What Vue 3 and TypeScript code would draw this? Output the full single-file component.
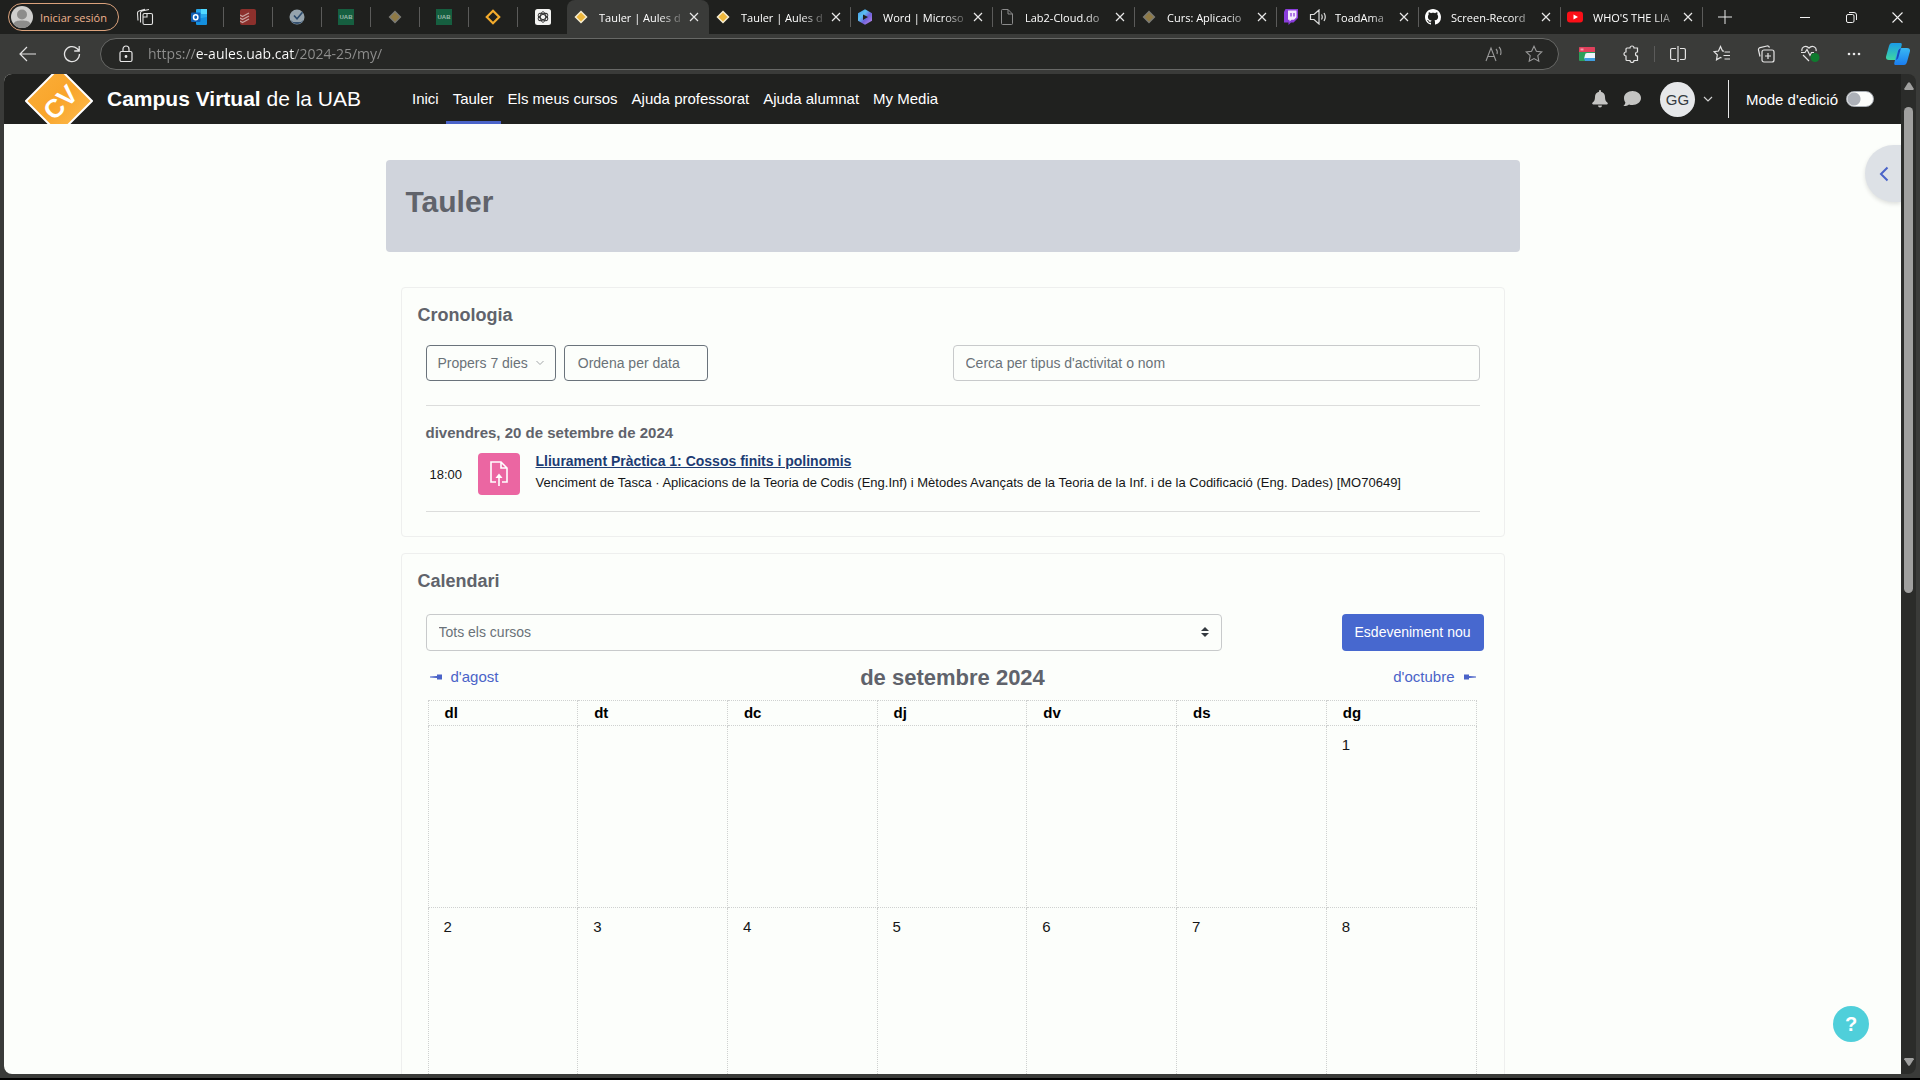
<script setup lang="ts">
import { ref } from 'vue'

interface Tab {
  icon: string
  title: string
  sound?: boolean
}

const pinned: string[] = ['outlook', 'todoist', 'check', 'uab', 'dim', 'uab', 'ring', 'gpt']

const tabs: Tab[] = [
  { icon: 'gold', title: 'Tauler | Aules d' },
  { icon: 'gold', title: 'Tauler | Aules d' },
  { icon: 'm365', title: 'Word | Microso' },
  { icon: 'file', title: 'Lab2-Cloud.do' },
  { icon: 'dim', title: 'Curs: Aplicacio' },
  { icon: 'twitch', title: 'ToadAma', sound: true },
  { icon: 'github', title: 'Screen-Record' },
  { icon: 'youtube', title: "WHO'S THE LIA" },
]

const url = ref('https://e-aules.uab.cat/2024-25/my/')
const search = ref('')
const editing = ref(false)

const menu: string[] = ['Inici', 'Tauler', 'Els meus cursos', 'Ajuda professorat', 'Ajuda alumnat', 'My Media']
const weekdays: string[] = ['dl', 'dt', 'dc', 'dj', 'dv', 'ds', 'dg']
const weeks: string[][] = [
  ['', '', '', '', '', '', '1'],
  ['2', '3', '4', '5', '6', '7', '8'],
]
</script>

<template>
  <div class="browser">
    <svg class="sprite" width="0" height="0" aria-hidden="true">
      <defs>
        <linearGradient id="gr-m365" x1="0" y1="0" x2="1" y2="1">
          <stop offset="0" stop-color="#3f8fe8" /><stop offset=".35" stop-color="#5ac0f0" /><stop offset=".6" stop-color="#6f62dc" /><stop offset="1" stop-color="#c58be8" />
        </linearGradient>
        <linearGradient id="gr-cop1" x1="0" y1="0" x2="0" y2="1">
          <stop offset="0" stop-color="#1a9be8" /><stop offset="1" stop-color="#3fd6a0" />
        </linearGradient>
        <linearGradient id="gr-cop2" x1="0" y1="0" x2="0" y2="1">
          <stop offset="0" stop-color="#39b8f2" /><stop offset="1" stop-color="#1a7df0" />
        </linearGradient>
        <linearGradient id="gr-logo" x1="0" y1="0" x2="1" y2="1">
          <stop offset="0" stop-color="#fbb03b" /><stop offset=".5" stop-color="#f9a52b" /><stop offset="1" stop-color="#fdc158" />
        </linearGradient>
      </defs>
      <symbol id="i-outlook" viewBox="0 0 16 16">
        <rect x="5" y="0" width="11" height="13" rx="1" fill="#28a8ea" /><rect x="10" y="0" width="6" height="5" fill="#50d9ff" />
        <path d="M5 10l11-2v7a1 1 0 0 1-1 1H6a1 1 0 0 1-1-1z" fill="#1490df" />
        <rect x="0" y="3.5" width="9.500" height="9.500" rx="1" fill="#0f5fb5" />
        <ellipse cx="4.700" cy="8.200" rx="2.200" ry="2.500" fill="none" stroke="#fff" stroke-width="1.500" />
      </symbol>
      <symbol id="i-todoist" viewBox="0 0 16 16">
        <rect width="16" height="16" rx="2" fill="#8c302c" />
        <path d="M0 6l2.500 1.600L9 4M0 9l2.500 1.600L9 7M0 12l2.500 1.600L9 10" fill="none" stroke="#c9a39f" stroke-width="1.300" />
      </symbol>
      <symbol id="i-check" viewBox="0 0 16 16">
        <circle cx="8" cy="8" r="7.500" fill="#95a3ad" /><path d="M1.500 11a7.300 7.300 0 0 0 13 0L12 13H4z" fill="#35506e" />
        <path d="M5 6.500l3 3.200 5.500-6.500" fill="none" stroke="#2b4a6c" stroke-width="1.600" />
      </symbol>
      <symbol id="i-uab" viewBox="0 0 16 16">
        <rect width="16" height="16" fill="#165f40" />
        <text x="8" y="10" text-anchor="middle" font-size="6" font-weight="700" font-family="Liberation Sans, sans-serif" fill="#9cb8aa">UAB</text>
      </symbol>
      <symbol id="i-dim" viewBox="0 0 16 16"><path d="M8 2.500L13.500 8 8 13.500 2.500 8z" fill="#8f7a45" stroke="#7b7b76" stroke-width="1.300" /></symbol>
      <symbol id="i-ring" viewBox="0 0 16 16"><path d="M8 1.800L14.200 8 8 14.200 1.800 8z" fill="none" stroke="#f3ab2c" stroke-width="2.200" /></symbol>
      <symbol id="i-gold" viewBox="0 0 16 16"><path d="M8 2.500L13.500 8 8 13.500 2.500 8z" fill="#efb83c" stroke="#f6ecd0" stroke-width="1.500" /></symbol>
      <symbol id="i-gpt" viewBox="0 0 16 16">
        <rect width="16" height="16" rx="2.500" fill="#f4f4f2" />
        <g fill="none" stroke="#333" stroke-width=".9">
          <ellipse cx="8" cy="8" rx="2.600" ry="5.300" /><ellipse cx="8" cy="8" rx="2.600" ry="5.300" transform="rotate(60 8 8)" /><ellipse cx="8" cy="8" rx="2.600" ry="5.300" transform="rotate(120 8 8)" />
        </g>
      </symbol>
      <symbol id="i-m365" viewBox="0 0 16 16">
        <path d="M8 .3L15 4.200v7.600L8 15.700 1 11.800V4.200zM6 5.500v5.500l5-3z" fill="url(#gr-m365)" fill-rule="evenodd" />
      </symbol>
      <symbol id="i-file" viewBox="0 0 16 16">
        <path d="M2.500 1.500a1 1 0 0 1 1-1H9l4.500 4.500v9.500a1 1 0 0 1-1 1h-9a1 1 0 0 1-1-1zM9 .5V5h4.500" fill="none" stroke="#8b8b8b" />
      </symbol>
      <symbol id="i-twitch" viewBox="0 0 16 16">
        <path d="M2.500 0H15v9l-4.500 4.500H8L5.500 16v-2.500H1V3z" fill="#8a3ddb" /><path d="M5 1.500h8.500v6.800L11 10.800H8.500l-2 1.700v-1.700H5z" fill="#f3eafc" />
        <path d="M8 4v3.500M11 4v3.500" stroke="#8a3ddb" stroke-width="1.300" />
      </symbol>
      <symbol id="i-github" viewBox="0 0 16 16">
        <path fill="#fff" d="M8 0C3.580 0 0 3.580 0 8c0 3.540 2.290 6.530 5.470 7.590.4.070.55-.17.55-.38 0-.19-.01-.82-.01-1.490-2.010.37-2.530-.49-2.690-.94-.09-.23-.48-.94-.82-1.130-.28-.15-.68-.52-.01-.53.63-.01 1.080.58 1.230.82.72 1.210 1.870.87 2.330.66.07-.52.28-.87.510-1.070-1.780-.2-3.640-.89-3.640-3.950 0-.87.310-1.590.820-2.150-.08-.2-.36-1.020.08-2.120 0 0 .67-.21 2.200.82.64-.18 1.320-.27 2-.27s1.360.09 2 .27c1.530-1.040 2.200-.82 2.200-.82.44 1.100.16 1.920.08 2.120.51.56.82 1.270.82 2.150 0 3.070-1.870 3.750-3.650 3.950.29.25.54.73.54 1.480 0 1.070-.01 1.930-.01 2.200 0 .21.15.46.55.38A8.010 8.010 0 0 0 16 8c0-4.420-3.580-8-8-8z" />
      </symbol>
      <symbol id="i-youtube" viewBox="0 0 16 16"><rect y="2.500" width="16" height="11" rx="3" fill="#fb0f17" /><path d="M6.500 5.500v5L11 8z" fill="#fff" /></symbol>
    </svg>

    <header class="tabstrip">
      <button class="signin" type="button">
        <svg width="22" height="22" viewBox="0 0 22 22"><circle cx="11" cy="11" r="11" fill="#cfcfcd" /><circle cx="11" cy="8.500" r="5" fill="#8d8d8b" /><path d="M2.500 18c1-3 4-3.500 8.500-3.500s7.500.5 8.500 3.500A11 11 0 0 1 2.500 18z" fill="#8d8d8b" /></svg>
        <span>Iniciar sesión</span>
      </button>
      <button class="icon-btn workspaces" type="button" aria-label="Espais de treball">
        <svg width="18" height="18" viewBox="0 0 18 18" fill="none" stroke="#e4e4e4" stroke-width="1.100"><rect x="7" y="5.500" width="9.500" height="11" rx="1.500" /><path d="M4.500 14.500V5a2 2 0 0 1 1.500-2l7-1.500M2 12.500L1.500 5A2 2 0 0 1 3 3l6-1.800M7 9h4V5.500" /></svg>
      </button>
      <div class="pinned">
        <button v-for="(p, i) in pinned" :key="i" class="pin" type="button" :aria-label="p">
          <svg width="16" height="16"><use :href="'#i-' + p" /></svg>
        </button>
      </div>
      <div class="tabs">
        <div v-for="(t, i) in tabs" :key="i" class="tab" :class="{ active: i === 0 }">
          <svg class="fav" width="16" height="16"><use :href="'#i-' + t.icon" /></svg>
          <svg v-if="t.sound" class="sound" width="18" height="16" viewBox="0 0 18 16" fill="none" stroke="#ddd" stroke-width="1.200"><path d="M1.500 5.500h3.500L10 1v14l-5-4.500H1.500zM12.500 5.500q1.500 2.500 0 5M15 4q2.500 4 0 8" /></svg>
          <span class="title">{{ t.title }}</span>
          <button class="close" type="button" aria-label="Tanca la pestanya">
            <svg width="10" height="10" viewBox="0 0 10 10" stroke="#e8e8e8" stroke-width="1.200"><path d="M1 1l8 8M9 1L1 9" /></svg>
          </button>
        </div>
      </div>
      <button class="icon-btn plus" type="button" aria-label="Pestanya nova">
        <svg width="14" height="14" viewBox="0 0 14 14" stroke="#e8e8e8"><path d="M7 0v14M0 7h14" /></svg>
      </button>
      <div class="window-btns">
        <button class="icon-btn" type="button" aria-label="Minimitza"><svg width="10" height="10" viewBox="0 0 10 10" stroke="#f2f2f2"><path d="M0 5.500h10" /></svg></button>
        <button class="icon-btn" type="button" aria-label="Restaura"><svg width="11" height="11" viewBox="0 0 11 11" fill="none" stroke="#f2f2f2"><rect x=".5" y="2.500" width="7.500" height="8" rx="1.500" /><path d="M3 .5h5a2.500 2.500 0 0 1 2.500 2.500v5" /></svg></button>
        <button class="icon-btn" type="button" aria-label="Tanca"><svg width="11" height="11" viewBox="0 0 11 11" stroke="#f2f2f2" stroke-width="1.100"><path d="M.5.5l10 10M10.500.5l-10 10" /></svg></button>
      </div>
    </header>

    <div class="toolbar">
      <button class="icon-btn" type="button" aria-label="Enrere"><svg width="18" height="16" viewBox="0 0 18 16" fill="none" stroke="#e4e4e4" stroke-width="1.200"><path d="M17 8H1.500M8 1L1 8l7 7" /></svg></button>
      <button class="icon-btn" type="button" aria-label="Actualitza"><svg width="18" height="18" viewBox="0 0 18 18" fill="none" stroke="#e4e4e4" stroke-width="1.300"><path d="M16.500 9A7.500 7.500 0 1 1 14 3.500L16 5.500M16.200 1v5h-5" /></svg></button>
      <div class="address">
        <svg width="16" height="18" viewBox="0 0 16 18" fill="none" stroke="#e8e8e8" stroke-width="1.200"><rect x="2" y="6.500" width="12" height="10" rx="1.500" /><path d="M5 6.500V4a3 3 0 0 1 6 0v2.500" /><circle cx="8" cy="11.500" r=".8" fill="#e8e8e8" /></svg>
        <input v-model="url" class="url" type="text" aria-label="Adreça" spellcheck="false" />
        <button class="icon-btn" type="button" aria-label="Llegeix en veu alta"><svg width="18" height="16" viewBox="0 0 18 16" fill="none" stroke="#9a9a9a" stroke-width="1.100"><path d="M1 15L6 2l5 13M3 10.500h6M11 3q2 2 1 5M14 1q3 3 1.500 8" /></svg></button>
        <button class="icon-btn" type="button" aria-label="Afegeix als preferits"><svg width="18" height="18" viewBox="0 0 18 18" fill="none" stroke="#9a9a9a" stroke-width="1.100"><path d="M9 1.200l2.400 5 5.400.7-4 3.800 1 5.500L9 13.600l-4.800 2.600 1-5.500-4-3.800 5.400-.7z" /></svg></button>
      </div>
      <div class="actions">
        <button class="icon-btn" type="button" aria-label="Extensió"><svg width="16" height="14" viewBox="0 0 16 14"><rect width="16" height="14" rx="1" fill="#2e9e5b" /><path d="M0 1a1 1 0 0 1 1-1h14a1 1 0 0 1 1 1v4H0z" fill="#e0405c" /><rect x="1.500" y="1.500" width="3" height="2" fill="#f59aac" /><path d="M6 8q0-2 2-2h8v6H5z" fill="#eef5fb" /><path d="M5 11h11v3H6z" fill="#3f9ee0" /></svg></button>
        <button class="icon-btn" type="button" aria-label="Extensions"><svg width="18" height="18" viewBox="0 0 18 18" fill="none" stroke="#e4e4e4" stroke-width="1.200"><path d="M5 3h3a2 2 0 1 1 4 0h3.500v4a2 2 0 1 0 0 4v4.500H12a2 2 0 0 1-4 0H5a1 1 0 0 1-1-1V11a2 2 0 1 1 0-4V4a1 1 0 0 1 1-1z" /></svg></button>
        <i class="rule"></i>
        <button class="icon-btn" type="button" aria-label="Pantalla dividida"><svg width="16" height="16" viewBox="0 0 16 16" fill="none" stroke="#e4e4e4" stroke-width="1.200"><path d="M6 2.500H2A1.500 1.500 0 0 0 .6 4v8A1.500 1.500 0 0 0 2 13.500h4M10 2.500h4A1.500 1.500 0 0 1 15.400 4v8a1.500 1.500 0 0 1-1.400 1.500h-4M8 0v16" /></svg></button>
        <button class="icon-btn" type="button" aria-label="Preferits"><svg width="18" height="18" viewBox="0 0 18 18" fill="none" stroke="#e4e4e4" stroke-width="1.200"><path d="M11 6.200L9.500 6 7.500 1.500 5.500 6 1 6.600l3.300 3.200-.8 5L7.500 12.500l1 .5M11.500 7H17M10.500 10.500H17M11.500 14H17" /></svg></button>
        <button class="icon-btn" type="button" aria-label="Col·leccions"><svg width="18" height="18" viewBox="0 0 18 18" fill="none" stroke="#e4e4e4" stroke-width="1.200"><rect x="5" y="5" width="12" height="12" rx="2" /><path d="M11 8v6M8 11h6M3 11.500L1.500 5A2 2 0 0 1 3 2.600l7-1.600a2 2 0 0 1 2.400 1.600" /></svg></button>
        <button class="icon-btn" type="button" aria-label="Rendiment"><svg width="20" height="18" viewBox="0 0 20 18" fill="none" stroke="#e4e4e4" stroke-width="1.200"><path d="M2 6C1 2 6-.5 9 3c3-3.500 8-1 7 3M3 10l6 6M1 7.500h4l2-3 3 6 1.500-3H14" /><circle cx="15" cy="12.500" r="4.500" fill="#0f7a2e" stroke="none" /></svg></button>
        <button class="icon-btn" type="button" aria-label="Més"><svg width="14" height="4" viewBox="0 0 14 4" fill="#e8e8e8"><circle cx="2" cy="2" r="1.300" /><circle cx="7" cy="2" r="1.300" /><circle cx="12" cy="2" r="1.300" /></svg></button>
        <button class="icon-btn" type="button" aria-label="Copilot"><svg width="24" height="22" viewBox="0 0 24 22"><path d="M6 0h8c2 0 2 1 1.500 3L12.500 14c-.5 2-1.500 3-3.500 3H3c-2.500 0-3.500-1.500-2.800-4L3 3c.6-2 1.500-3 3-3z" fill="url(#gr-cop1)" /><path d="M18 5h3c2.500 0 3.500 1.500 2.800 4L21 19c-.6 2-1.500 3-3 3h-8c-2 0-2-1-1.500-3l3-11c.5-2 1.500-3 3.500-3z" fill="url(#gr-cop2)" /><path d="M16 5c-2 .3-3.500 1-4 3L10 17h-1c2 0 3-1 3.500-3L15 5z" fill="#1849b8" /></svg></button>
      </div>
    </div>

    <div class="viewport">
      <div class="page">
        <nav class="navbar">
          <a class="brand" href="#">
            <svg width="70" height="50" viewBox="0 0 70 50"><path d="M35-6L68 27 35 60 2 27z" fill="url(#gr-logo)" stroke="#fff" stroke-width="2" stroke-linejoin="round" /><text x="35" y="38" text-anchor="middle" transform="rotate(-45 35 27)" font-size="26" font-weight="700" font-family="Liberation Sans, sans-serif" fill="#fff">CV</text></svg>
            <span><b>Campus Virtual</b> de la UAB</span>
          </a>
          <ul class="menu">
            <li v-for="m in menu" :key="m"><a href="#" :class="{ current: m === 'Tauler' }">{{ m }}</a></li>
          </ul>
          <div class="user">
            <button class="icon-btn" type="button" aria-label="Notificacions"><svg width="16" height="18" viewBox="0 0 16 18" fill="#c4c4c2"><path d="M8 0a1 1 0 0 1 1 1v.8c2.500.5 4 2.500 4 5 0 4 1.500 5 2.500 6 .7.8.2 1.700-.7 1.700H1.200c-.9 0-1.400-.9-.7-1.700 1-1 2.500-2 2.500-6 0-2.500 1.500-4.500 4-5V1a1 1 0 0 1 1-1zM6 15.500h4a2 2 0 0 1-4 0z" /></svg></button>
            <button class="icon-btn" type="button" aria-label="Missatges"><svg width="18" height="16" viewBox="0 0 18 16" fill="#c4c4c2"><path d="M9.500 0C14.200 0 18 3 18 7s-3.800 7-8.500 7c-1.300 0-2.500-.2-3.500-.6C4.500 14.500 2.500 15.200.4 15c1-1 1.800-2.400 2-3.600C1.500 10.200 1 8.700 1 7c0-4 3.800-7 8.500-7z" /></svg></button>
            <button class="account" type="button"><span class="avatar">GG</span><svg width="10" height="6" viewBox="0 0 10 6" fill="none" stroke="#d0d0d0" stroke-width="1.200"><path d="M1 1l4 4 4-4" /></svg></button>
            <label class="edit"><span>Mode d'edició</span><input v-model="editing" type="checkbox" role="switch" /></label>
          </div>
        </nav>

        <button class="drawer" type="button" aria-label="Obre el calaix de blocs"><svg width="10" height="16" viewBox="0 0 10 16" fill="none" stroke="#4a63c8" stroke-width="2"><path d="M8.500 1.500L2 8l6.500 6.500" /></svg></button>

        <main class="content">
          <div class="banner"><h1>Tauler</h1></div>

          <section class="card">
            <h2>Cronologia</h2>
            <div class="inner">
              <div class="filters">
                <button class="outline" type="button">Propers 7 dies <svg width="8" height="6" viewBox="0 0 8 6" fill="none" stroke="#a3a6a8"><path d="M.5 1L4 4.500 7.500 1" /></svg></button>
                <button class="outline sort" type="button">Ordena per data</button>
                <input v-model="search" class="search" type="text" placeholder="Cerca per tipus d'activitat o nom" aria-label="Cerca per tipus d'activitat o nom" />
              </div>
              <hr />
              <h3>divendres, 20 de setembre de 2024</h3>
              <div class="event">
                <time>18:00</time>
                <span class="badge"><svg width="18" height="26" viewBox="0 0 18 26" fill="none" stroke="#fff" stroke-width="1.600"><path d="M6 21H1V1h10l6 6v14h-5M11 1v6h6M9 25V14" /><path d="M9 12.500l-3.500 4.500h7z" fill="#fff" stroke="none" /></svg></span>
                <div class="detail">
                  <a href="#">Lliurament Pràctica 1: Cossos finits i polinomis</a>
                  <p>Venciment de Tasca · Aplicacions de la Teoria de Codis (Eng.Inf) i Mètodes Avançats de la Teoria de la Inf. i de la Codificació (Eng. Dades) [MO70649]</p>
                </div>
              </div>
              <hr class="last" />
            </div>
          </section>

          <section class="card">
            <h2>Calendari</h2>
            <div class="course-row">
              <div class="select-wrap">
                <select aria-label="Curs"><option>Tots els cursos</option></select>
                <svg width="8" height="10" viewBox="0 0 8 10" fill="#343a40"><path d="M4 0l4 4H0zM0 6h8l-4 4z" /></svg>
              </div>
              <button class="primary" type="button">Esdeveniment nou</button>
            </div>
            <div class="month-nav">
              <a href="#"><svg width="12" height="6" viewBox="0 0 12 6" fill="#4a63c8"><path d="M0 2.500L7 2V.5h5v5H7V4L0 3.500z" /></svg>d'agost</a>
              <h4>de setembre 2024</h4>
              <a class="next" href="#">d'octubre<svg width="12" height="6" viewBox="0 0 12 6" fill="#4a63c8"><path d="M12 2.500L5 2V.5H0v5h5V4l7-.5z" /></svg></a>
            </div>
            <table>
              <thead><tr><th v-for="d in weekdays" :key="d" scope="col">{{ d }}</th></tr></thead>
              <tbody><tr v-for="(w, i) in weeks" :key="i"><td v-for="(d, j) in w" :key="j">{{ d }}</td></tr></tbody>
            </table>
          </section>
        </main>

        <button class="help" type="button" aria-label="Ajuda">?</button>
      </div>
      <div class="scrollbar">
        <svg width="10" height="8" viewBox="0 0 10 8" fill="#a0a09f"><path d="M4 .8q1-1 2 0l3.800 6q0 1.200-1 1.200H1.200q-1 0-1-1.200z" /></svg>
        <div class="track"><div class="thumb"></div></div>
        <svg width="10" height="8" viewBox="0 0 10 8" fill="#a0a09f"><path d="M4 7.200q1 1 2 0l3.800-6Q9.800 0 8.800 0H1.200q-1 0-1 1.200z" /></svg>
      </div>
    </div>
  </div>
</template>

<style>
body {
  margin: 0;
  background: #000;
}
</style>

<style scoped>
* {
  box-sizing: border-box;
}
button,
input,
select {
  font: inherit;
  color: inherit;
  margin: 0;
}
button {
  padding: 0;
  border: 0;
  background: none;
  white-space: nowrap;
}
svg {
  display: block;
  flex: none;
}
a {
  color: inherit;
  text-decoration: none;
}
.sprite {
  position: absolute;
}
.browser {
  display: flex;
  flex-direction: column;
  height: 100vh;
  overflow: hidden;
  border-bottom: 2px solid #000;
  background: #3a3b39;
  font-family: 'Open Sans', 'Noto Sans', sans-serif;
  font-size: 11px;
  color: #fff;
}
.icon-btn {
  display: flex;
  align-items: center;
  justify-content: center;
}

/* tab strip */
.tabstrip {
  display: flex;
  align-items: center;
  height: 34px;
  flex: none;
  background: #1f201e;
}
.signin {
  display: flex;
  align-items: center;
  gap: 7px;
  width: 111px;
  height: 28px;
  margin-left: 8px;
  padding-left: 2px;
  border: 1px solid #dba27c;
  border-radius: 14px;
  color: #f0b48f;
}
.workspaces {
  width: 52px;
}
.pinned {
  display: flex;
  margin-left: 4px;
}
.pin {
  display: flex;
  align-items: center;
  justify-content: center;
  width: 49px;
  height: 20px;
  border-right: 1px solid #5b5b5a;
}
.pin:last-child {
  border-right: 0;
}
.tabs {
  display: flex;
  height: 34px;
}
.tab {
  display: flex;
  align-items: center;
  width: 142px;
  padding: 0 10px 0 6px;
  border-radius: 8px 8px 0 0;
  background: linear-gradient(#5b5b5a, #5b5b5a) right center / 1px 20px no-repeat;
}
.tab.active {
  background: #3a3b39;
}
.fav {
  margin-right: 10px;
}
.sound {
  margin-right: 8px;
}
.title {
  flex: 1;
  white-space: nowrap;
  -webkit-mask-image: linear-gradient(to left, rgba(0, 0, 0, 0.15), #000 24px);
  mask-image: linear-gradient(to left, rgba(0, 0, 0, 0.15), #000 24px);
}
.close {
  margin-left: 6px;
}
.plus {
  width: 44px;
}
.window-btns {
  display: flex;
  margin-left: auto;
}
.window-btns .icon-btn {
  width: 46px;
  height: 34px;
}

/* address bar */
.toolbar {
  display: flex;
  align-items: center;
  height: 40px;
  flex: none;
  padding-left: 19px;
}
.toolbar > .icon-btn {
  margin-right: 26px;
}
.toolbar > .icon-btn + .icon-btn {
  margin-right: 19px;
}
.address {
  display: flex;
  align-items: center;
  gap: 22px;
  flex: 1;
  height: 32px;
  padding: 0 15px 0 17px;
  border: 1px solid #676866;
  border-radius: 16px;
  background: #262725;
}
.url {
  flex: 1;
  min-width: 0;
  margin-left: -8px;
  padding: 0;
  border: 0;
  outline: 0;
  font-size: 14px;
  line-height: 20px;
  color: transparent;
  background: linear-gradient(to right, #8f8f8e 48px, #fff 48px, #fff 147px, #8f8f8e 147px);
  -webkit-background-clip: text;
  background-clip: text;
}
.actions {
  display: flex;
  align-items: center;
}
.actions .icon-btn {
  width: 44px;
}
.actions .icon-btn:first-child {
  margin-left: 6px;
}
.rule {
  width: 1px;
  height: 16px;
  margin: 0 1px;
  background: #5b5b5a;
}

/* page frame */
.viewport {
  display: flex;
  flex: 1;
  min-height: 0;
  margin: 0 4px 4px;
  border-radius: 8px;
  overflow: hidden;
  background: #2b2c2a;
  font-family: 'Liberation Sans', Arial, sans-serif;
}
.page {
  position: relative;
  flex: 1;
  overflow: hidden;
  background: #fcfefb;
  color: #151617;
  font-size: 14px;
}
.scrollbar {
  display: flex;
  flex-direction: column;
  align-items: center;
  width: 15px;
  padding: 8px 0;
}
.track {
  flex: 1;
  width: 9px;
  margin: 17px 0;
}
.thumb {
  height: 52%;
  border-radius: 5px;
  background: #a0a09f;
}

/* site navbar */
.navbar {
  display: flex;
  align-items: center;
  height: 50px;
  padding-left: 20px;
  background: #20211f;
  color: #fff;
  font-size: 15px;
  white-space: nowrap;
}
.brand {
  display: flex;
  align-items: center;
  gap: 13px;
  width: 381px;
  font-size: 21px;
}
.menu {
  display: flex;
  margin: 0;
  padding: 0;
  list-style: none;
}
.menu a {
  display: block;
  padding: 0 7px;
  border-bottom: 3px solid transparent;
  border-top: 3px solid transparent;
  line-height: 44px;
}
.menu .current {
  border-bottom-color: #4a63c8;
}
.user {
  display: flex;
  align-items: center;
  margin-left: auto;
  padding-right: 27px;
}
.user .icon-btn {
  margin-right: 15px;
}
.account {
  display: flex;
  align-items: center;
  gap: 8px;
  margin-left: 4px;
}
.avatar {
  width: 35px;
  height: 35px;
  border-radius: 50%;
  background: #e6e8ea;
  color: #343a40;
  font-size: 15px;
  line-height: 35px;
}
.edit {
  display: flex;
  align-items: center;
  gap: 8px;
  height: 38px;
  margin-left: 15px;
  padding-left: 17px;
  border-left: 1px solid #e8e8e8;
}
.edit input {
  appearance: none;
  width: 28px;
  height: 16px;
  border: 1px solid #a8adb3;
  border-radius: 8px;
  background: radial-gradient(circle at 7px 7px, #adb1b8 6px, #fcfdfb 7px);
}
.drawer {
  position: absolute;
  top: 71px;
  right: 0;
  display: flex;
  align-items: center;
  width: 36px;
  height: 57px;
  padding-left: 14px;
  border-radius: 29px 0 0 29px;
  background: #dde1e6;
  box-shadow: 0 2px 4px rgba(0, 0, 0, 0.12);
}
.help {
  position: absolute;
  right: 32px;
  bottom: 32px;
  width: 36px;
  height: 36px;
  border-radius: 50%;
  background: #4fcfda;
  color: #fff;
  font-size: 20px;
  font-weight: 700;
}

/* dashboard */
.content {
  max-width: 1134px;
  margin: 36px auto 0;
}
.banner {
  padding: 24px 20px 32px;
  border-radius: 4px;
  background: #d0d4dc;
}
h1,
h2,
h3,
h4,
p {
  margin: 0;
}
h1,
h2,
h3,
h4 {
  color: #60636b;
}
h1 {
  font-size: 30px;
  line-height: 36px;
}
.card {
  margin: 16px 15px 0;
  padding: 15px 16px 24px;
  border: 1px solid #eeefee;
  border-radius: 4px;
}
.banner + .card {
  margin-top: 35px;
}
h2 {
  font-size: 18px;
  line-height: 24px;
}
.inner {
  margin: 18px 8px 0;
}
.filters {
  display: flex;
}
.outline {
  display: flex;
  align-items: center;
  gap: 8px;
  height: 36px;
  margin-right: 8px;
  padding: 0 11px;
  border: 1px solid #6a737b;
  border-radius: 4px;
  color: #6a7278;
}
.sort {
  width: 144px;
  padding-left: 13px;
}
.search {
  width: 50%;
  height: 36px;
  margin-left: auto;
  padding: 0 12px;
  border: 1px solid #c8cacb;
  border-radius: 4px;
  background: transparent;
}
.search::placeholder {
  color: #6a7278;
  opacity: 1;
}
hr {
  height: 1px;
  margin: 24px 0 17px;
  border: 0;
  background: #dcdddc;
}
hr.last {
  margin: 16px 0 0;
}
h3 {
  font-size: 15px;
  line-height: 20px;
}
.event {
  display: flex;
  align-items: center;
  margin-top: 10px;
}
.event time {
  width: 52px;
  padding-left: 4px;
  font-size: 13px;
}
.badge {
  display: flex;
  align-items: center;
  justify-content: center;
  width: 42px;
  height: 42px;
  margin-right: 16px;
  border-radius: 4px;
  background: #eb66a2;
}
.detail {
  display: flex;
  flex-direction: column;
  align-items: flex-start;
  align-self: flex-start;
  gap: 4px;
  line-height: 17px;
}
.detail a {
  color: #1d3c73;
  font-weight: 700;
  text-decoration: underline;
}
.detail p {
  font-size: 13px;
}
.course-row {
  display: flex;
  gap: 120px;
  height: 37px;
  margin: 21px 4px 0 8px;
}
.select-wrap {
  position: relative;
  flex: 1;
}
.select-wrap select {
  appearance: none;
  width: 100%;
  height: 37px;
  padding: 0 12px 2px;
  border: 1px solid #c8cacb;
  border-radius: 4px;
  background: transparent;
  color: #6a7278;
}
.select-wrap svg {
  position: absolute;
  top: 13px;
  right: 13px;
}
.primary {
  padding: 0 13px 2px;
  border-radius: 4px;
  background: #4768cf;
  color: #fff;
}
.month-nav {
  display: flex;
  align-items: center;
  justify-content: space-between;
  margin: 13px 12px 8px;
  font-size: 15px;
}
.month-nav a {
  display: flex;
  align-items: center;
  flex: 1;
  gap: 9px;
  padding-bottom: 3px;
  color: #4a63c8;
}
.month-nav .next {
  justify-content: flex-end;
}
h4 {
  font-size: 22px;
  line-height: 28px;
}
table {
  width: calc(100% - 21px);
  margin: 0 10px;
  border-collapse: collapse;
  table-layout: fixed;
  font-size: 15px;
}
th,
td {
  border: 1px dotted #cfd1d0;
  text-align: left;
  vertical-align: top;
}
th {
  padding: 0 16px;
  line-height: 24px;
  color: #000;
}
td {
  height: 182px;
  padding: 9px 15px;
  line-height: 20px;
}
</style>
